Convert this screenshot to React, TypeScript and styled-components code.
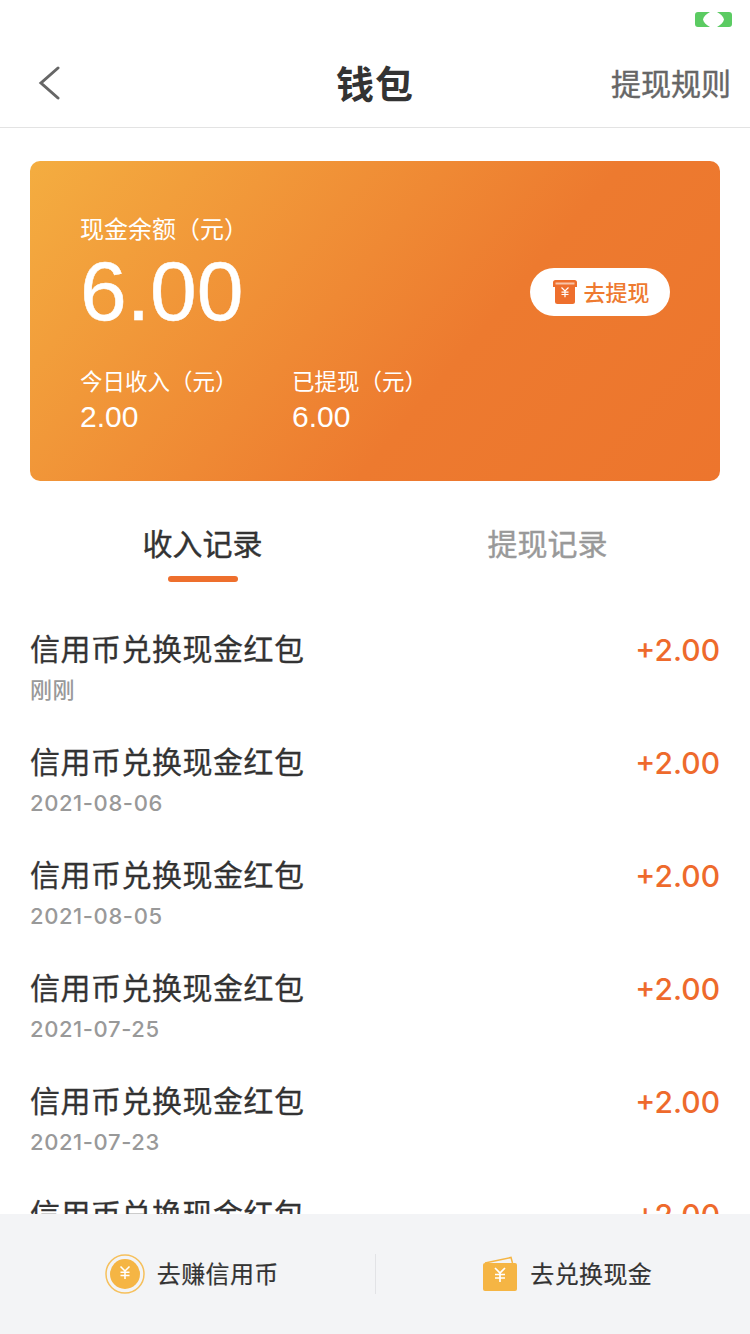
import styled, { createGlobalStyle } from 'styled-components'

const GlobalStyle = createGlobalStyle`
  html, body {
    margin: 0;
    padding: 0;
    background: #fff;
  }
  body {
    font-family: "Liberation Sans", "Noto Sans CJK SC", sans-serif;
  }
`

const Page = styled.div`
  width: 750px;
  height: 1334px;
  display: flex;
  flex-direction: column;
  overflow: hidden;
  background: #fff;
`

const StatusBar = styled.div`
  height: 39px;
  flex: none;
  display: flex;
  justify-content: flex-end;
  align-items: flex-start;
  padding: 12px 18px 0 0;
  box-sizing: border-box;
`

const NavBar = styled.header`
  height: 89px;
  box-sizing: border-box;
  flex: none;
  display: flex;
  align-items: center;
  justify-content: space-between;
  padding: 0 19px 0 36px;
  border-bottom: 1px solid #e3e3e3;
  position: relative;
`

const NavTitle = styled.h1`
  position: absolute;
  left: 0;
  right: 0;
  top: 21px;
  margin: 0;
  text-align: center;
  font-size: 38px;
  line-height: 50px;
  font-weight: 700;
  color: #333;
  letter-spacing: 1px;
`

const NavAction = styled.span`
  margin-top: 4px;
  font-size: 30px;
  line-height: 40px;
  color: #666;
  -webkit-text-stroke: 0.4px #666;
`

const Card = styled.section`
  flex: none;
  margin: 33px 30px 0;
  height: 320px;
  box-sizing: border-box;
  padding: 52px 50px 0;
  border-radius: 10px;
  background: linear-gradient(130deg, #f4ad40 0%, #ed7a2f 62%, #ed752d 100%);
  color: #fff;
  display: flex;
  flex-direction: column;
`

const BalanceRow = styled.div`
  display: flex;
  justify-content: space-between;
  align-items: flex-end;
`

const BalanceLabel = styled.div`
  font-size: 24px;
  line-height: 34px;
`

const BalanceValue = styled.div`
  font-size: 84px;
  line-height: 92px;
  margin-top: -2px;
  margin-bottom: 1px;
  -webkit-text-stroke: 0.5px #fff;
`

const WithdrawButton = styled.button`
  width: 140px;
  height: 48px;
  margin-bottom: 22px;
  border: 0;
  border-radius: 24px;
  background: #fff;
  color: #ee7a30;
  font: inherit;
  font-size: 22px;
  font-weight: 500;
  padding: 0 0 0 3px;
  display: flex;
  align-items: center;
  justify-content: center;
  gap: 6px;
`

const ButtonLabel = styled.span`
  margin-bottom: 3px;
`

const Stats = styled.div`
  display: flex;
  margin-top: 29px;
`

const Stat = styled.div`
  width: 212px;
`

const StatLabel = styled.div`
  font-size: 22.5px;
  line-height: 32px;
`

const StatValue = styled.div`
  font-size: 30px;
  line-height: 36px;
`

const Tabs = styled.nav`
  flex: none;
  display: flex;
  margin: 42px 30px 0;
`

const Tab = styled.div<{ $active?: boolean }>`
  width: 345px;
  text-align: center;
  font-size: 30px;
  line-height: 44px;
  color: ${({ $active }) => ($active ? '#333' : '#999')};
  -webkit-text-stroke: 0.4px ${({ $active }) => ($active ? '#333' : '#999')};
  padding-bottom: 15px;
  position: relative;

  &::after {
    content: '';
    display: ${({ $active }) => ($active ? 'block' : 'none')};
    position: absolute;
    left: 50%;
    bottom: 0;
    margin-left: -35px;
    width: 70px;
    height: 6px;
    border-radius: 3px;
    background: #ee6f2d;
  }
`

const List = styled.div`
  flex: 1;
  min-height: 0;
  overflow: hidden;
  padding: 47px 30px 0;
`

const Row = styled.div`
  height: 113px;
  display: flex;
  justify-content: space-between;
  align-items: flex-start;
`

const RowTitle = styled.div`
  font-size: 30px;
  line-height: 42px;
  color: #333;
  letter-spacing: 0.5px;
  -webkit-text-stroke: 0.3px #333;
`

const RowDate = styled.div`
  margin-top: 4px;
  font-family: Inter, "Noto Sans CJK SC", sans-serif;
  font-size: 22px;
  font-weight: 500;
  line-height: 30px;
  letter-spacing: 0.6px;
  color: #999;
`

const Amount = styled.div`
  font-family: Inter, "Liberation Sans", sans-serif;
  font-size: 30px;
  line-height: 42px;
  color: #ee6a2c;
  font-weight: 500;
`

const Footer = styled.footer`
  flex: none;
  height: 120px;
  background: #f3f4f6;
  display: flex;
  align-items: center;
`

const FooterItem = styled.div<{ $divider?: boolean }>`
  flex: 1;
  height: 40px;
  box-sizing: border-box;
  padding-left: 9px;
  display: flex;
  align-items: center;
  justify-content: center;
  gap: 12px;
  border-left: ${({ $divider }) => ($divider ? '1px solid #e2e3e6' : '0')};
`

const FooterLabel = styled.span`
  font-size: 24px;
  line-height: 34px;
  margin-top: 1px;
  color: #333;
  letter-spacing: 0.4px;
  -webkit-text-stroke: 0.2px #333;
`

const records = ['刚刚', '2021-08-06', '2021-08-05', '2021-07-25', '2021-07-23', '2021-07-20']

function YenMark({ x, y, size }: { x: number; y: number; size: number }) {
  const s = size / 2
  return (
    <path
      d={`M${x - s} ${y - s}L${x} ${y}L${x + s} ${y - s}M${x} ${y}V${y + size * 0.9}M${x - s} ${y + size * 0.15}H${x + s}M${x - s} ${y + size * 0.5}H${x + s}`}
      fill="none"
      stroke="#fff"
      strokeWidth={size * 0.17}
    />
  )
}

function SignalIcon() {
  return (
    <svg width="37" height="15" viewBox="0 0 37 15">
      <path d="M3 0H15C11 2 8.5 5 8 7.5C8.5 10 11 13 15 15H3A3 3 0 0 1 0 12V3A3 3 0 0 1 3 0Z" fill="#5bcb62" />
      <path d="M34 0H22C26 2 28.5 5 29 7.5C28.5 10 26 13 22 15H34A3 3 0 0 0 37 12V3A3 3 0 0 0 34 0Z" fill="#5bcb62" />
    </svg>
  )
}

function BoxIcon() {
  return (
    <svg width="24" height="24" viewBox="0 0 24 24">
      <path d="M0 2.5A2.5 2.5 0 0 1 2.5 0H21.5A2.5 2.5 0 0 1 24 2.5V7H0Z" fill="#ee6f2d" />
      <path d="M2.5 2.5H21.5V4.5H2.5Z" fill="#f8c4a8" />
      <path d="M2 6H22V21.5A2.5 2.5 0 0 1 19.5 24H4.5A2.5 2.5 0 0 1 2 21.5Z" fill="#ee6f2d" />
      <YenMark x={12} y={11} size={7} />
    </svg>
  )
}

function CoinIcon() {
  return (
    <svg width="40" height="40" viewBox="0 0 40 40">
      <circle cx="20" cy="20" r="19" fill="none" stroke="#f6c05c" strokeWidth="1.5" />
      <circle cx="20" cy="20" r="15" fill="#f5b544" />
      <YenMark x={20} y={17} size={9} />
    </svg>
  )
}

function WalletIcon() {
  return (
    <svg width="36" height="36" viewBox="0 0 36 36">
      <path d="M3 7L29 1.5L30.5 7" fill="none" stroke="#f5b544" strokeWidth="1.5" />
      <rect x="1" y="7" width="34" height="28" rx="2" fill="#f5b544" />
      <YenMark x={18} y={17} size={10} />
    </svg>
  )
}

export default function App() {
  return (
    <Page>
      <GlobalStyle />
      <StatusBar>
        <SignalIcon />
      </StatusBar>
      <NavBar>
        <svg width="24" height="36" viewBox="0 0 24 36">
          <path d="M22 3L5 18L22 33" fill="none" stroke="#666" strokeWidth="3" strokeLinecap="round" />
        </svg>
        <NavTitle>钱包</NavTitle>
        <NavAction>提现规则</NavAction>
      </NavBar>
      <Card>
        <BalanceRow>
          <div>
            <BalanceLabel>现金余额（元）</BalanceLabel>
            <BalanceValue>6.00</BalanceValue>
          </div>
          <WithdrawButton>
            <BoxIcon />
            <ButtonLabel>去提现</ButtonLabel>
          </WithdrawButton>
        </BalanceRow>
        <Stats>
          <Stat>
            <StatLabel>今日收入（元）</StatLabel>
            <StatValue>2.00</StatValue>
          </Stat>
          <Stat>
            <StatLabel>已提现（元）</StatLabel>
            <StatValue>6.00</StatValue>
          </Stat>
        </Stats>
      </Card>
      <Tabs>
        <Tab $active>收入记录</Tab>
        <Tab>提现记录</Tab>
      </Tabs>
      <List>
        {records.map((date, i) => (
          <Row key={i}>
            <div>
              <RowTitle>信用币兑换现金红包</RowTitle>
              <RowDate>{date}</RowDate>
            </div>
            <Amount>+2.00</Amount>
          </Row>
        ))}
      </List>
      <Footer>
        <FooterItem>
          <CoinIcon />
          <FooterLabel>去赚信用币</FooterLabel>
        </FooterItem>
        <FooterItem $divider>
          <WalletIcon />
          <FooterLabel>去兑换现金</FooterLabel>
        </FooterItem>
      </Footer>
    </Page>
  )
}
